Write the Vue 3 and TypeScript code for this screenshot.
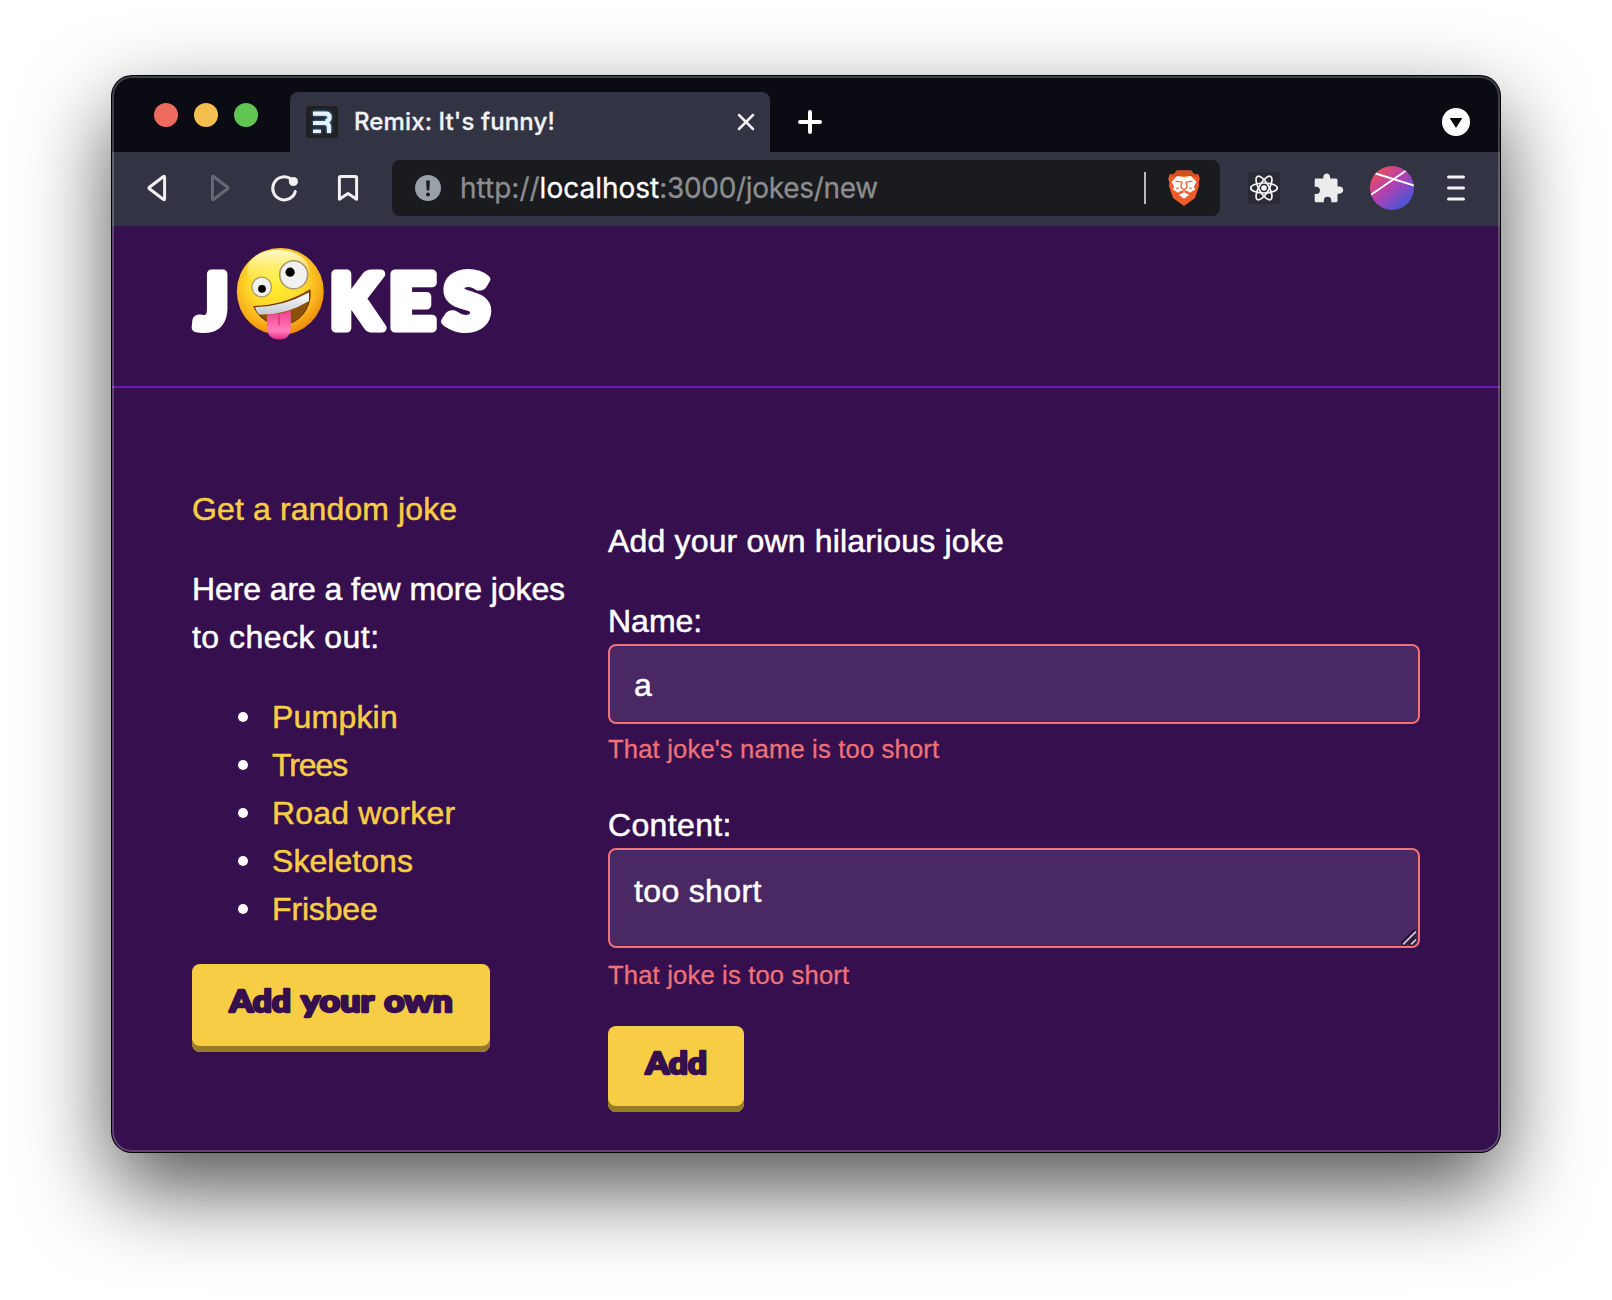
<script setup lang="ts">
interface Joke {
  id: number
  name: string
  tracking: string
}

const jokes: Joke[] = [
  { id: 1, name: 'Pumpkin', tracking: '0.2px' },
  { id: 2, name: 'Trees', tracking: '-1.1px' },
  { id: 3, name: 'Road worker', tracking: '0.17px' },
  { id: 4, name: 'Skeletons', tracking: '0.05px' },
  { id: 5, name: 'Frisbee', tracking: '-0.15px' },
]
const lights: string[] = ['#ed6a5e', '#f5bf4f', '#61c554']
const orbits: number[] = [0, 60, 120]
</script>

<template>
  <div class="desktop">
    <div class="window">
      <div class="tabstrip">
        <div class="lights">
          <i v-for="c in lights" :key="c" :style="{ background: c }"></i>
        </div>
        <div class="tab">
          <svg class="favicon" viewBox="0 0 32 32" width="32" height="32">
            <rect width="32" height="32" rx="3" fill="#212121" />
            <g class="glow" fill="none" stroke="#e8f2ff">
              <path d="M7 7.6H19.5Q23.6 7.6 23.6 11.3Q23.6 15 19.5 15.4" stroke-width="4.2" />
              <path d="M7 17H18.5Q23 17 23 21V27" stroke-width="4.2" />
              <path d="M7 25.3H15" stroke-width="3.4" />
            </g>
          </svg>
          <span class="tab-title">Remix: It's funny!</span>
          <svg class="close" viewBox="0 0 18 18" width="18" height="18">
            <path d="M2 2L16 16M16 2L2 16" stroke="#f1f1f1" stroke-width="2.5" stroke-linecap="round" />
          </svg>
        </div>
        <svg class="plus" viewBox="0 0 24 24" width="24" height="24">
          <path d="M12 2V22M2 12H22" stroke="#fff" stroke-width="4" stroke-linecap="round" />
        </svg>
        <svg class="more" viewBox="0 0 28 28" width="28" height="28">
          <circle cx="14" cy="14" r="14" fill="#fff" />
          <path d="M7.7 10H20.3L14 20Z" fill="#0b0b14" />
        </svg>
      </div>

      <div class="toolbar">
        <svg class="nav" viewBox="0 0 228 32" width="228" height="32" fill="none" stroke="#f0f0f0" stroke-width="3" stroke-linejoin="round" stroke-linecap="round">
          <path d="M17.6 5.4Q17.6 3.6 16.2 4.7L2.4 15.2Q1.4 16 2.4 16.8L16.2 27.3Q17.6 28.4 17.6 26.6Z" />
          <path d="M65.4 5.4Q65.4 3.6 66.8 4.7L80.6 15.2Q81.6 16 80.6 16.8L66.8 27.3Q65.4 28.4 65.4 26.6Z" stroke="#666874" />
          <path d="M143 6.4A11.5 11.5 0 1 0 148.3 19.5" />
          <circle cx="146.4" cy="9.5" r="4.6" fill="#f0f0f0" stroke="none" />
          <path d="M193.4 4.4H208.6Q209.6 4.4 209.6 5.4V27.2L201 21.6L192.4 27.2V5.4Q192.4 4.4 193.4 4.4Z" />
        </svg>
        <div class="address">
          <svg class="info" viewBox="0 0 26 26" width="26" height="26">
            <circle cx="13" cy="13" r="13" fill="#9aa0a8" />
            <path d="M11.1 5.5H14.9L14.3 15.5H11.7Z" fill="#1a1b1f" />
            <circle cx="13" cy="19.4" r="2" fill="#1a1b1f" />
          </svg>
          <span class="url">http://<b>localhost</b><span class="path">:3000/jokes/new</span></span>
          <i class="divider"></i>
          <svg class="brave" viewBox="0 0 32 36" width="32" height="36">
            <path d="M9 0.5H23L26.5 4.5L30 4L31.8 8.5L30.8 12L31 16L27 28L16 36L5 28L1 16L1.2 12L0.2 8.5L2 4L5.5 4.5Z" fill="#f15a29" />
            <path d="M9 0.5H23L26.5 4.5L30 4L31 6.5L16 6L1 6.5L2 4L5.5 4.5Z" fill="#d9501f" />
            <path d="M16 7L23 6L28.5 12L25.8 16.5L27.2 19.5L21.5 23L16.8 21.5H15.2L10.5 23L4.8 19.5L6.2 16.5L3.5 12L9 6Z" fill="#fff" />
            <path d="M16 22.3L21.2 24.8L16 28.7L10.8 24.8Z" fill="#fff" />
            <path d="M7.5 11.2L14 12.2L12.8 17.3L16 20L19.2 17.3L18 12.2L24.5 11.2M8.3 18.8L10.5 17.6M23.7 18.8L21.5 17.6M10.5 22.8L16 20.5L21.5 22.8" fill="none" stroke="#f15a29" stroke-width="1.3" />
          </svg>
        </div>
        <svg class="react" viewBox="0 0 32 32" width="32" height="32" fill="none" stroke="#f4f4f4" stroke-width="1.7">
          <rect width="32" height="32" rx="2" fill="#292b36" stroke="none" />
          <ellipse v-for="a in orbits" :key="a" cx="16" cy="16" rx="13.3" ry="5" :transform="`rotate(${a} 16 16)`" />
          <circle cx="16" cy="16" r="2.8" fill="#f4f4f4" stroke="none" />
        </svg>
        <svg class="puzzle" viewBox="0 0 30 30" width="30" height="30">
          <path d="M0.7 7Q0.7 5.6 2.2 5.6H9.3V4Q9.6 0.5 12.7 0.5Q15.8 0.5 16.1 4V5.6H22Q23.5 5.6 23.5 7.1V13.5H25.3Q29.2 13.8 29.2 17.1Q29.2 20.4 25.3 20.7H23.5V27.7Q23.5 29.2 22 29.2H17.3V27.2Q16.9 23.8 13.6 23.8Q10.2 23.8 9.8 27.2V29.2H2.2Q0.7 29.2 0.7 27.7V21.1H2.5Q5.9 20.7 5.9 17.4Q5.9 14.1 2.5 13.7H0.7Z" fill="#ececec" />
        </svg>
        <svg class="avatar" viewBox="0 0 44 44" width="44" height="44">
          <defs>
            <linearGradient id="profile" x1="0.15" y1="0.1" x2="0.85" y2="0.92">
              <stop offset="0" stop-color="#e8505a" />
              <stop offset="0.42" stop-color="#b73fae" />
              <stop offset="1" stop-color="#3f57dc" />
            </linearGradient>
            <clipPath id="disc"><circle cx="22" cy="22" r="22" /></clipPath>
          </defs>
          <circle cx="22" cy="22" r="22" fill="url(#profile)" />
          <path d="M-1 30L37 4M4 7L46 20" stroke="#fff" stroke-width="1.9" clip-path="url(#disc)" />
        </svg>
        <svg class="menu" viewBox="0 0 18 26" width="18" height="26">
          <path d="M1.5 2H16.5M1.5 13H16.5M1.5 24H16.5" stroke="#f4f4f4" stroke-width="3" stroke-linecap="round" />
        </svg>
      </div>

      <div class="page">
        <header class="header">
          <svg class="logo" viewBox="0 0 310 100" width="310" height="100" role="img" aria-label="JOKES">
            <defs>
              <radialGradient id="face" cx="0.45" cy="0.38" r="0.64">
                <stop offset="0" stop-color="#fff02e" />
                <stop offset="0.5" stop-color="#ffd92a" />
                <stop offset="0.78" stop-color="#f9b11c" />
                <stop offset="1" stop-color="#e98508" />
              </radialGradient>
              <linearGradient id="shine" x1="0" y1="0" x2="0" y2="1">
                <stop offset="0" stop-color="#fffde0" stop-opacity="0.9" />
                <stop offset="1" stop-color="#fff36b" stop-opacity="0" />
              </linearGradient>
              <linearGradient id="teeth" x1="0" y1="0" x2="0" y2="1">
                <stop offset="0" stop-color="#fff" />
                <stop offset="1" stop-color="#c4c9cf" />
              </linearGradient>
              <linearGradient id="tongue" x1="0" y1="0" x2="0" y2="1">
                <stop offset="0" stop-color="#f23f8c" />
                <stop offset="0.7" stop-color="#ff7dbb" />
                <stop offset="1" stop-color="#e8287f" />
              </linearGradient>
            </defs>
            <g class="wordmark">
              <text x="5.5" y="79.5" textLength="32.5" lengthAdjust="spacingAndGlyphs">J</text>
              <text x="140.3" y="79.5" textLength="51" lengthAdjust="spacingAndGlyphs">K</text>
              <text x="199.3" y="79.5" textLength="45.5" lengthAdjust="spacingAndGlyphs">E</text>
              <text x="254.6" y="79.5" textLength="44.5" lengthAdjust="spacingAndGlyphs">S</text>
            </g>
            <g transform="translate(2 0)">
              <circle cx="88.3" cy="43.5" r="43.5" fill="url(#face)" />
              <ellipse cx="86" cy="22" rx="31" ry="20" fill="url(#shine)" />
              <circle cx="69.7" cy="39" r="9.8" fill="#f1f1ef" stroke="#a99a72" stroke-width="1.3" />
              <circle cx="101.7" cy="26.8" r="14" fill="#f1f1ef" stroke="#a99a72" stroke-width="1.6" />
              <circle cx="70" cy="40.8" r="3.9" fill="#000" />
              <circle cx="98.1" cy="24.2" r="4.6" fill="#000" />
              <path d="M62 58.5Q92 58 118 42Q119 56 111 66Q103 76 90 77Q70 76 62 58.5Z" fill="#8c5104" stroke="#70350a" stroke-width="1.2" stroke-linejoin="round" />
              <path d="M63 59.3Q92 58.5 117 44.5V53Q94 67.5 67 66.5Q64 63 63 59.3Z" fill="url(#teeth)" />
              <path d="M75 66.6Q88 66.5 98.8 62.5V78Q98.8 91.5 87.5 91.5Q75 91.5 75 78Z" fill="url(#tongue)" />
              <path d="M87 67V77" stroke="#d92676" stroke-width="1.2" />
            </g>
          </svg>
        </header>

        <main class="main">
          <aside class="side">
            <p class="random"><a>Get a random joke</a></p>
            <p><span class="intro">Here are a few more jokes</span><br /><span class="intro-end">to check out:</span></p>
            <ul>
              <li v-for="j in jokes" :key="j.id"><a :style="{ letterSpacing: j.tracking }">{{ j.name }}</a></li>
            </ul>
            <svg class="button own" width="298" height="88" role="button">
              <text x="37.5" y="48" textLength="61.5" lengthAdjust="spacingAndGlyphs">Add</text>
              <text x="109" y="48" textLength="73" lengthAdjust="spacingAndGlyphs">your</text>
              <text x="192.3" y="48" textLength="68.5" lengthAdjust="spacingAndGlyphs">own</text>
            </svg>
          </aside>
          <section class="form">
            <p class="lead">Add your own hilarious joke</p>
            <label>Name:</label>
            <div class="field name">a</div>
            <div class="error">That joke's name is too short</div>
            <label class="second">Content:</label>
            <div class="field content">
              too short
              <svg class="grip" viewBox="0 0 16 16" width="16" height="16">
                <path d="M1 15L15 1M9 15L15 9" stroke="#1c0b2c" stroke-width="5" />
                <path d="M2 14.5L15 1.5M10 14.5L15 9.5" stroke="#c5bccd" stroke-width="2" />
              </svg>
            </div>
            <div class="error last">That joke is too short</div>
            <svg class="button add" width="136" height="86" role="button">
              <text x="37.5" y="48" textLength="61.5" lengthAdjust="spacingAndGlyphs">Add</text>
            </svg>
          </section>
        </main>
      </div>
    </div>
  </div>
</template>

<style>
body {
  background: #fff;
}
</style>

<style scoped>
.desktop {
  box-sizing: border-box;
  width: 1612px;
  height: 1300px;
  padding: 76px 112px 148px;
  overflow: hidden;
  background: #fff;
}
.window {
  position: relative;
  height: 1076px;
  border-radius: 20px;
  overflow: hidden;
  background: #350f4e;
  box-shadow: 0 0 0 1px #000, 0 36px 88px rgba(0, 0, 0, 0.69);
}
/* Translucent rim laid over the window's edge */
.window::after {
  content: '';
  position: absolute;
  inset: 0;
  border-radius: 20px;
  box-shadow: inset 0 0 0 2px rgba(255, 255, 255, 0.22);
  pointer-events: none;
}
svg {
  display: block;
  flex: none;
}
.tabstrip {
  display: flex;
  height: 76px;
  background: #0b0b14;
}
.lights {
  display: flex;
  gap: 16px;
  padding: 27px 32px 0 42px;
}
.lights i {
  width: 24px;
  height: 24px;
  border-radius: 50%;
}
.tab {
  box-sizing: border-box;
  display: flex;
  width: 480px;
  height: 60px;
  margin-top: 16px;
  padding: 14px 15px 0 16px;
  border-radius: 8px 8px 0 0;
  background: #323443;
}
.glow {
  filter: drop-shadow(0 0 1.5px #4b9cf5);
}
.tab-title {
  flex: 1;
  margin-left: 16px;
  font: 500 24px/32px Inter, sans-serif;
  letter-spacing: 0.12px;
  color: #f2f2f3;
  -webkit-text-stroke: 0.3px #f2f2f3;
}
.close {
  margin-top: 7px;
}
.plus {
  margin: 34px 0 0 28px;
}
.more {
  margin: 32px 30px 0 auto;
}
.toolbar {
  display: flex;
  height: 74px;
  background: #323443;
}
.nav {
  margin: 20px 0 0 35px;
}
.address {
  display: flex;
  width: 828px;
  height: 56px;
  margin: 8px 0 0 17px;
  border-radius: 8px;
  background: #1a1b1f;
}
.info {
  margin: 15px 0 0 23px;
}
.url {
  flex: 1;
  margin-left: 19px;
  font: 400 28px/57px Inter, sans-serif;
  color: #8c8d8f;
  white-space: nowrap;
  -webkit-text-stroke: 0.3px;
}
.url b {
  font-weight: 400;
  color: #fff;
}
.path {
  letter-spacing: -0.31px;
}
.divider {
  width: 2px;
  height: 32px;
  margin: 12px 22px 0 0;
  background: #b9babc;
}
.brave {
  margin: 10px 20px 0 0;
}
.react {
  margin: 20px 0 0 28px;
}
.puzzle {
  margin: 21px 0 0 33.5px;
}
.avatar {
  margin: 14px 0 0 26.5px;
}
.menu {
  margin: 23px 0 0 33px;
}
.page {
  height: 926px;
  background: #350f4e;
  font: 400 32px/48px 'Liberation Sans', Arial, sans-serif;
  color: #fff;
  -webkit-text-stroke: 0.5px;
}
.header {
  box-sizing: border-box;
  height: 162px;
  padding: 22px 0 0 78px;
  border-bottom: 2px solid #6b1aae;
}
.wordmark {
  font: 900 74px Lato, sans-serif;
  fill: #fff;
  stroke: #fff;
  stroke-width: 9px;
  stroke-linejoin: round;
  -webkit-text-stroke: 9px #fff;
}
.main {
  display: flex;
  padding: 97px 80px 0;
}
.side {
  width: 416px;
}
p {
  margin: 0 0 32px;
}
a {
  color: #f7cd46;
}
.random {
  letter-spacing: 0.12px;
}
.intro {
  letter-spacing: -0.09px;
}
.intro-end {
  letter-spacing: 0.47px;
}
ul {
  margin: 0 0 31px;
  padding: 0;
  list-style: none;
}
li {
  display: flex;
  align-items: center;
}
li::before {
  content: '';
  width: 10px;
  height: 10px;
  margin: 0 24px 0 46px;
  border-radius: 50%;
  background: #fff;
}
.button {
  border-radius: 8px;
  background: #f7cd46;
  box-shadow: inset 0 -6px 0 #957c29;
  font: 900 30px Lato, sans-serif;
}
.button text {
  fill: #350f4e;
  stroke: #350f4e;
  stroke-width: 2.4px;
  stroke-linejoin: round;
  -webkit-text-stroke: 2.4px #350f4e;
}
.form {
  flex: 1;
  padding-top: 32px;
}
.lead {
  letter-spacing: 0.17px;
}
label {
  display: block;
  height: 47px;
}
label.second {
  margin-top: 33px;
  letter-spacing: 0.35px;
}
.field {
  position: relative;
  box-sizing: border-box;
  border: 2px solid #ee7277;
  border-radius: 8px;
  background: #4a2863;
  padding-left: 24px;
}
.field.name {
  height: 80px;
  line-height: 78px;
}
.field.content {
  height: 100px;
  padding-top: 17px;
  letter-spacing: 0.35px;
}
.grip {
  position: absolute;
  right: 1px;
  bottom: 0;
}
.error {
  height: 44px;
  font-size: 25.6px;
  line-height: 50px;
  letter-spacing: 0.17px;
  color: #ee7277;
  -webkit-text-stroke: 0.3px;
}
.error.last {
  line-height: 54px;
}
.add {
  margin-top: 34px;
}
</style>
